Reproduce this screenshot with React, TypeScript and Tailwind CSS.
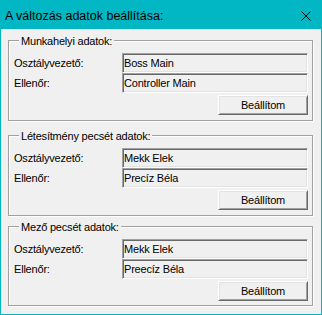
import React from 'react';

interface GroupProps {
  title: string;
  boss: string;
  checker: string;
  className?: string;
}

function Row({ label, value }: { label: string; value: string }) {
  return (
    <div className="flex h-[20px] items-center">
      <div className="w-[108px] leading-[18px]">{label}</div>
      <div className="h-[20px] flex-1 border border-t-[#a0a0a0] border-l-[#a0a0a0] border-b-white border-r-white pl-[1px] leading-[18px] shadow-[inset_1px_1px_0_#696969,inset_-1px_-1px_0_#e3e3e3]">
        {value}
      </div>
    </div>
  );
}

function Group({ title, boss, checker, className = '' }: GroupProps) {
  return (
    <div
      className={`border border-[#a0a0a0] pl-[5px] pr-[4px] shadow-[inset_1px_1px_0_#fff,1px_1px_0_#fff] ${className}`}
    >
      <div className="-mt-[7px] ml-[5px] w-fit bg-[#f0f0f0] px-[2px] leading-[15px]">{title}</div>
      <div className="mt-[4px] flex flex-col">
        <Row label="Osztályvezető:" value={boss} />
        <Row label="Ellenőr:" value={checker} />
      </div>
      <div className="mt-[2px] flex justify-end">
        <button className="h-[20px] w-[90px] border border-t-white border-l-white border-b-[#696969] border-r-[#696969] bg-[#f0f0f0] leading-[18px] text-black shadow-[inset_1px_1px_0_#e3e3e3,inset_-1px_-1px_0_#a0a0a0]">
          Beállítom
        </button>
      </div>
    </div>
  );
}

export default function App() {
  return (
    <div className="flex h-[315px] w-[322px] flex-col border border-[#00b7c3] bg-[#f0f0f0] font-['Liberation_Sans',Arial,sans-serif] text-[11px] tracking-[-0.2px] text-black">
      <div className="flex h-[28px] shrink-0 items-center justify-between bg-[#00b7c3] pl-[4px] pr-[10px]">
        <span className="pt-[2px] text-[12.5px] leading-[15px] tracking-normal">A változás adatok beállítása:</span>
        <svg width="10" height="10" viewBox="0 0 10 10" className="mt-[2px]">
          <path d="M0.5 0.5 L9.5 9.5 M9.5 0.5 L0.5 9.5" stroke="#000" strokeWidth="1" />
        </svg>
      </div>
      <div className="flex flex-col pl-[7px] pr-[8px] pt-[11px]">
        <Group title="Munkahelyi adatok:" boss="Boss Main" checker="Controller Main" className="h-[81px]" />
        <Group
          title="Létesítmény pecsét adatok:"
          boss="Mekk Elek"
          checker="Precíz Béla"
          className="mt-[14px] h-[81px]"
        />
        <Group
          title="Mező pecsét adatok:"
          boss="Mekk Elek"
          checker="Preecíz Béla"
          className="mt-[10px] h-[80px]"
        />
      </div>
    </div>
  );
}
